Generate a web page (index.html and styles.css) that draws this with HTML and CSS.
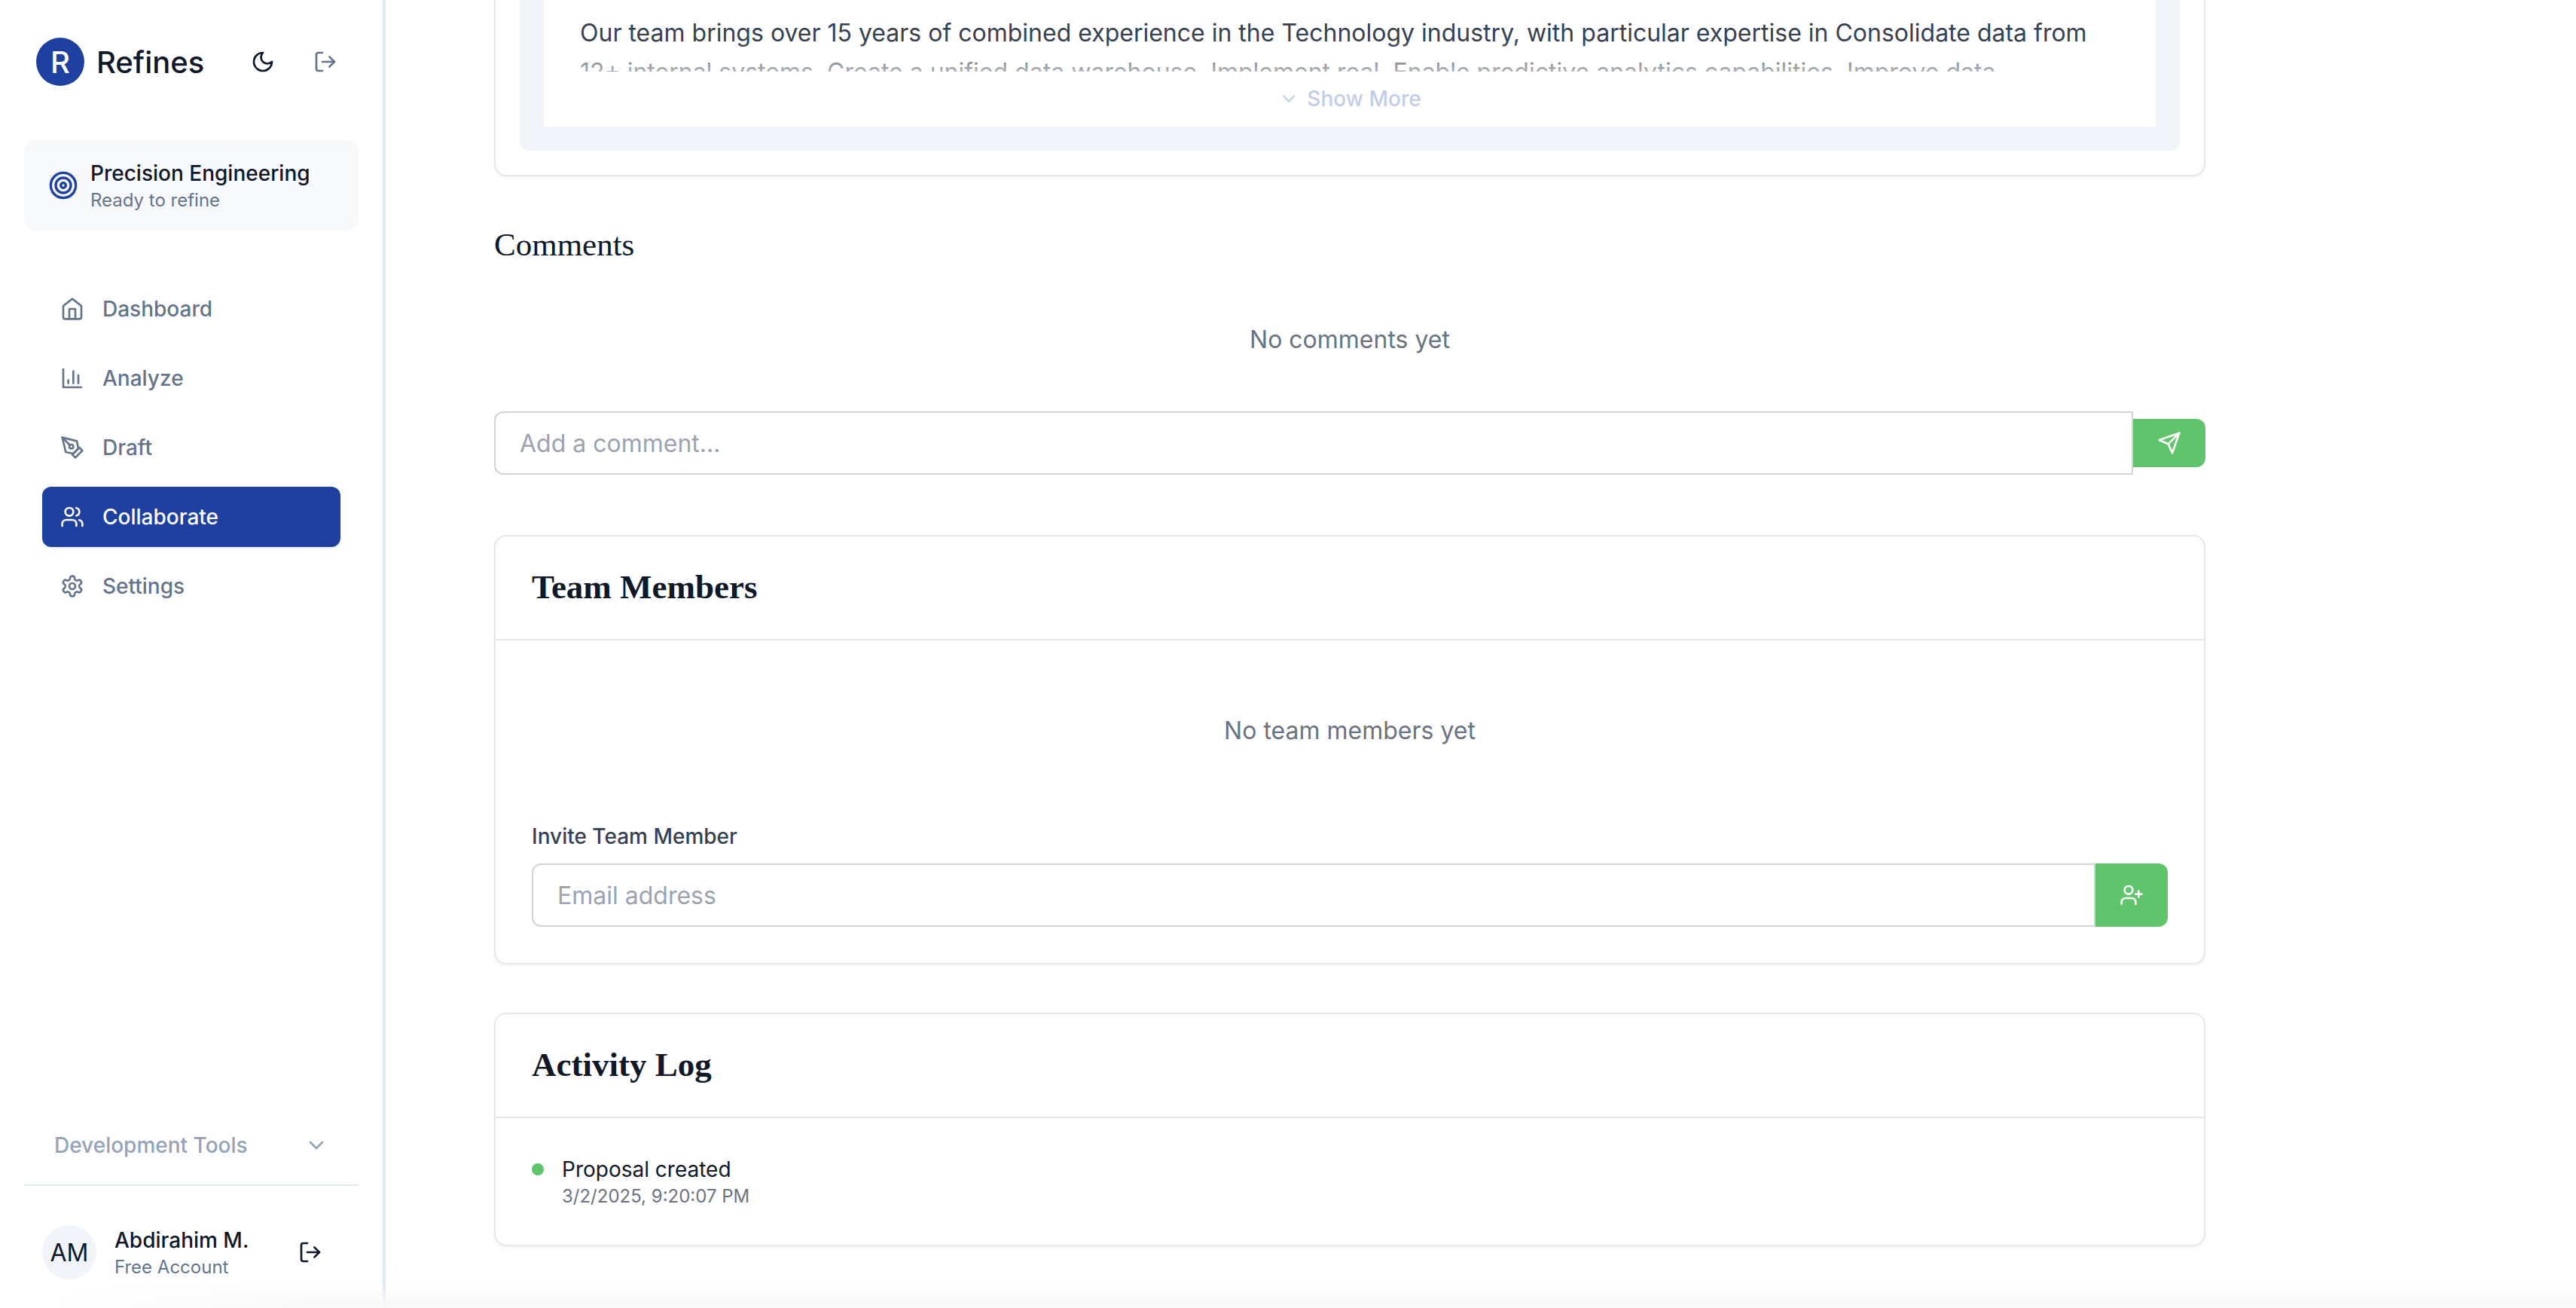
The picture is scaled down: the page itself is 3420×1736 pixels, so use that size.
FILE: index.html
```html
<!DOCTYPE html>
<html lang="en">
<head>
    <meta charset="UTF-8">
    <title>Refines</title>
    <link rel="stylesheet" href="styles.css">
</head>
<body>
<svg class="icon-defs" width="0" height="0">
    <symbol id="i-moon" viewBox="0 0 24 24"><path d="M12 3a6 6 0 0 0 9 9 9 9 0 1 1-9-9Z"/></symbol>
    <symbol id="i-logout" viewBox="0 0 24 24"><path d="M9 21H5a2 2 0 0 1-2-2V5a2 2 0 0 1 2-2h4"/><polyline points="16 17 21 12 16 7"/><line x1="21" y1="12" x2="9" y2="12"/></symbol>
    <symbol id="i-target" viewBox="0 0 24 24"><circle cx="12" cy="12" r="10"/><circle cx="12" cy="12" r="6"/><circle cx="12" cy="12" r="2"/></symbol>
    <symbol id="i-home" viewBox="0 0 24 24"><path d="m3 9 9-7 9 7v11a2 2 0 0 1-2 2H5a2 2 0 0 1-2-2z"/><polyline points="9 22 9 12 15 12 15 22"/></symbol>
    <symbol id="i-chart" viewBox="0 0 24 24"><path d="M3 3v18h18"/><path d="M18 17V9"/><path d="M13 17V5"/><path d="M8 17v-3"/></symbol>
    <symbol id="i-pen" viewBox="0 0 24 24"><path d="m12 19 7-7 3 3-7 7-3-3z"/><path d="m18 13-1.5-7.5L2 2l3.5 14.5L13 18l5-5z"/><path d="m2 2 7.586 7.586"/><circle cx="11" cy="11" r="2"/></symbol>
    <symbol id="i-users" viewBox="0 0 24 24"><path d="M16 21v-2a4 4 0 0 0-4-4H6a4 4 0 0 0-4 4v2"/><circle cx="9" cy="7" r="4"/><path d="M22 21v-2a4 4 0 0 0-3-3.87"/><path d="M16 3.13a4 4 0 0 1 0 7.75"/></symbol>
    <symbol id="i-settings" viewBox="0 0 24 24"><path d="M12.22 2h-.44a2 2 0 0 0-2 2v.18a2 2 0 0 1-1 1.73l-.43.25a2 2 0 0 1-2 0l-.15-.08a2 2 0 0 0-2.73.73l-.22.38a2 2 0 0 0 .73 2.73l.15.1a2 2 0 0 1 1 1.72v.51a2 2 0 0 1-1 1.74l-.15.09a2 2 0 0 0-.73 2.73l.22.38a2 2 0 0 0 2.73.73l.15-.08a2 2 0 0 1 2 0l.43.25a2 2 0 0 1 1 1.73V20a2 2 0 0 0 2 2h.44a2 2 0 0 0 2-2v-.18a2 2 0 0 1 1-1.73l.43-.25a2 2 0 0 1 2 0l.15.08a2 2 0 0 0 2.73-.73l.22-.39a2 2 0 0 0-.73-2.73l-.15-.08a2 2 0 0 1-1-1.74v-.5a2 2 0 0 1 1-1.74l.15-.09a2 2 0 0 0 .73-2.73l-.22-.38a2 2 0 0 0-2.73-.73l-.15.08a2 2 0 0 1-2 0l-.43-.25a2 2 0 0 1-1-1.73V4a2 2 0 0 0-2-2z"/><circle cx="12" cy="12" r="3"/></symbol>
    <symbol id="i-chevron" viewBox="0 0 24 24"><path d="m6 9 6 6 6-6"/></symbol>
    <symbol id="i-send" viewBox="0 0 24 24"><path d="m22 2-7 20-4-9-9-4Z"/><path d="M22 2 11 13"/></symbol>
    <symbol id="i-user-plus" viewBox="0 0 24 24"><path d="M16 21v-2a4 4 0 0 0-4-4H6a4 4 0 0 0-4 4v2"/><circle cx="9" cy="7" r="4"/><line x1="19" y1="8" x2="19" y2="14"/><line x1="22" y1="11" x2="16" y2="11"/></symbol>
</svg>

<div class="app">
    <aside class="sidebar">
        <div class="brand">
            <span class="brand__logo">R</span>
            <span class="brand__name">Refines</span>
            <div class="brand__actions">
                <svg class="icon icon--dark"><use href="#i-moon"/></svg>
                <svg class="icon"><use href="#i-logout"/></svg>
            </div>
        </div>

        <div class="focus-card">
            <svg class="icon icon--target"><use href="#i-target"/></svg>
            <div>
                <div class="focus-card__title">Precision Engineering</div>
                <div class="focus-card__sub">Ready to refine</div>
            </div>
        </div>

        <nav class="nav">
            <a class="nav__item"><svg class="icon"><use href="#i-home"/></svg>Dashboard</a>
            <a class="nav__item"><svg class="icon"><use href="#i-chart"/></svg>Analyze</a>
            <a class="nav__item"><svg class="icon"><use href="#i-pen"/></svg>Draft</a>
            <a class="nav__item nav__item--active"><svg class="icon"><use href="#i-users"/></svg>Collaborate</a>
            <a class="nav__item"><svg class="icon"><use href="#i-settings"/></svg>Settings</a>
        </nav>

        <div class="dev-tools">
            <span>Development Tools</span>
            <svg class="icon icon--muted"><use href="#i-chevron"/></svg>
        </div>

        <div class="account">
            <span class="account__avatar">AM</span>
            <div class="account__info">
                <div class="account__name">Abdirahim M.</div>
                <div class="account__plan">Free Account</div>
            </div>
            <svg class="icon icon--dark"><use href="#i-logout"/></svg>
        </div>
    </aside>

    <main class="main">
        <section class="card proposal">
            <div class="proposal__inner">
                <div class="proposal__sheet">
                    <p class="proposal__text">Our team brings over 15 years of combined experience in the Technology industry, with particular expertise in Consolidate data from 12+ internal systems. Create a unified data warehouse. Implement real. Enable predictive analytics capabilities. Improve data</p>
                    <div class="proposal__more">
                        <svg class="icon icon--more"><use href="#i-chevron"/></svg>
                        <span>Show More</span>
                    </div>
                </div>
            </div>
        </section>

        <section class="comments">
            <h3 class="comments__title">Comments</h3>
            <p class="empty comments__empty">No comments yet</p>
            <div class="comments__row">
                <input class="field" type="text" placeholder="Add a comment...">
                <button class="btn btn--small" type="button"><svg class="icon icon--white"><use href="#i-send"/></svg></button>
            </div>
        </section>

        <section class="card team">
            <header class="card__head"><h2>Team Members</h2></header>
            <div class="team__body">
                <p class="empty">No team members yet</p>
                <label class="team__label">Invite Team Member</label>
                <div class="team__row">
                    <input class="field" type="text" placeholder="Email address">
                    <button class="btn" type="button"><svg class="icon icon--white"><use href="#i-user-plus"/></svg></button>
                </div>
            </div>
        </section>

        <section class="card activity">
            <header class="card__head"><h2>Activity Log</h2></header>
            <div class="activity__body">
                <div class="activity__item">
                    <span class="activity__dot"></span>
                    <div>
                        <div class="activity__text">Proposal created</div>
                        <div class="activity__time">3/2/2025, 9:20:07 PM</div>
                    </div>
                </div>
            </div>
        </section>
    </main>

    <div class="page-fade"></div>
</div>
</body>
</html>
```

FILE: styles.css
```css
* {
    box-sizing: border-box;
}

html, body {
    margin: 0;
    height: 100%;
}

body {
    background: #fff;
    color: #0f172a;
    font-family: "Inter", "Liberation Sans", sans-serif;
}

.icon-defs {
    position: absolute;
}

.app {
    position: relative;
    display: flex;
    height: 1736px;
    overflow: hidden;
}

/* icons */
.icon {
    flex: none;
    width: 32px;
    height: 32px;
    fill: none;
    stroke: #64748b;
    stroke-width: 2;
    stroke-linecap: round;
    stroke-linejoin: round;
}

.icon--dark {
    stroke: #0f172a;
}

.icon--muted {
    stroke: #94a3b8;
}

.icon--white {
    stroke: #fff;
}

.icon--target {
    width: 40px;
    height: 40px;
    stroke: #1e40a0;
}

.icon--more {
    width: 28px;
    height: 28px;
    stroke: #c3cde8;
}

/* sidebar */
.sidebar {
    flex: none;
    display: flex;
    flex-direction: column;
    width: 512px;
    padding: 50px 32px 38px;
    border-right: 4px solid #e2e8f0;
}

.brand {
    display: flex;
    align-items: center;
    height: 64px;
    padding: 0 28px 0 16px;
}

.brand__logo {
    display: flex;
    align-items: center;
    justify-content: center;
    width: 64px;
    height: 64px;
    border-radius: 50%;
    background: #1e40a0;
    color: #fff;
    font-size: 40px;
    font-weight: 500;
}

.brand__name {
    margin-left: 16px;
    font-size: 40px;
    font-weight: 500;
}

.brand__actions {
    display: flex;
    gap: 51px;
    margin-left: auto;
}

.focus-card {
    display: flex;
    align-items: center;
    gap: 16px;
    height: 120px;
    margin-top: 72px;
    padding: 0 32px;
    border-radius: 16px;
    background: #f7f8fa;
}

.focus-card__title {
    font-size: 28px;
    line-height: 40px;
    font-weight: 500;
}

.focus-card__sub {
    font-size: 24px;
    line-height: 32px;
    color: #64748b;
}

.nav {
    display: flex;
    flex-direction: column;
    gap: 12px;
    margin-top: 64px;
    padding: 0 24px;
}

.nav__item {
    display: flex;
    align-items: center;
    gap: 24px;
    height: 80px;
    padding: 0 24px;
    border-radius: 12px;
    color: #64748b;
    font-size: 28px;
    font-weight: 500;
}

.nav__item--active {
    background: #1e40a0;
    color: #fff;
    box-shadow: 0 2px 4px rgba(15, 23, 42, .08);
}

.nav__item--active .icon {
    stroke: #fff;
}

.dev-tools {
    display: flex;
    align-items: center;
    justify-content: space-between;
    height: 64px;
    margin-top: auto;
    margin-bottom: 20px;
    padding: 0 40px;
    color: #94a3b8;
    font-size: 28px;
    font-weight: 500;
}

.account {
    display: flex;
    align-items: center;
    padding: 52px 48px 0 24px;
    border-top: 2px solid #e2e8f0;
}

.account__avatar {
    display: flex;
    align-items: center;
    justify-content: center;
    width: 72px;
    height: 72px;
    border-radius: 50%;
    background: #f1f5f9;
    font-size: 32px;
}

.account__info {
    flex: 1;
    margin-left: 24px;
}

.account__name {
    font-size: 28px;
    line-height: 40px;
    font-weight: 500;
}

.account__plan {
    font-size: 24px;
    line-height: 32px;
    color: #64748b;
}

/* main column */
.main {
    flex: 1;
    min-width: 0;
    padding: 0 492px 0 144px;
}

.card {
    border: 2px solid #e5e7eb;
    border-radius: 16px;
    background: #fff;
    box-shadow: 0 2px 4px rgba(15, 23, 42, .05);
}

.card__head {
    display: flex;
    align-items: center;
    height: 138px;
    padding: 0 48px 2px;
    border-bottom: 2px solid #e5e7eb;
}

.card__head h2 {
    margin: 0;
    font-family: "Liberation Serif", serif;
    font-size: 45px;
    font-weight: 700;
    color: #111827;
}

.empty {
    margin: 0;
    color: #6b7280;
    font-size: 32px;
    line-height: 48px;
    text-align: center;
}

.field {
    flex: 1;
    min-width: 0;
    height: 84px;
    padding: 0 32px;
    border: 2px solid #d1d5db;
    border-radius: 12px 0 0 12px;
    background: #fff;
    color: #111827;
    font-family: inherit;
    font-size: 32px;
    outline: none;
}

.field::placeholder {
    color: #9ca3af;
}

.btn {
    flex: none;
    display: flex;
    align-items: center;
    justify-content: center;
    width: 96px;
    height: 84px;
    padding: 0;
    border: 0;
    border-radius: 0 12px 12px 0;
    background: #5fc46b;
}

.btn--small {
    height: 64px;
}

/* proposal, scrolled so only the end of it shows */
.proposal {
    margin-top: -40px;
    padding: 0 32px 32px;
}

.proposal__inner {
    padding: 0 32px 32px;
    border-radius: 0 0 12px 12px;
    background: #f1f5f9;
}

.proposal__sheet {
    position: relative;
    height: 206px;
    padding: 56px 48px 0;
    overflow: hidden;
    background: #fff;
}

.proposal__text {
    width: 2044px;
    margin: 0;
    color: #374151;
    font-size: 32px;
    line-height: 52px;
}

.proposal__more {
    position: absolute;
    left: 0;
    right: 0;
    bottom: 0;
    display: flex;
    align-items: center;
    justify-content: center;
    gap: 10px;
    height: 73px;
    padding-bottom: 2px;
    background: #fff;
    color: #c3cde8;
    font-size: 28px;
    font-weight: 500;
}

.proposal__more::before {
    content: "";
    position: absolute;
    left: 0;
    right: 0;
    bottom: 100%;
    height: 40px;
    background: linear-gradient(to bottom, rgba(255, 255, 255, 0), rgba(255, 255, 255, .6));
}

/* comments */
.comments {
    margin-top: 63px;
}

.comments__title {
    margin: 0;
    font-family: "Liberation Serif", serif;
    font-size: 43px;
    line-height: 56px;
    font-weight: 400;
    color: #0f172a;
}

.comments__empty {
    margin-top: 74px;
}

.comments__row {
    display: flex;
    align-items: center;
    margin-top: 71px;
}

/* team */
.team {
    margin-top: 80px;
}

.team__body {
    padding: 96px 48px 48px;
}

.team__label {
    display: block;
    margin: 96px 0 16px;
    color: #374151;
    font-size: 28px;
    line-height: 40px;
    font-weight: 500;
}

.team__row {
    display: flex;
}

/* activity */
.activity {
    margin-top: 64px;
}

.activity__body {
    padding: 48px;
}

.activity__item {
    display: flex;
    gap: 24px;
}

.activity__dot {
    flex: none;
    width: 16px;
    height: 16px;
    margin-top: 12px;
    border-radius: 50%;
    background: #5fc46b;
}

.activity__text {
    color: #111827;
    font-size: 28px;
    line-height: 40px;
}

.activity__time {
    color: #6b7280;
    font-size: 24px;
    line-height: 32px;
}

/* faint shade along the bottom edge of the window */
.page-fade {
    position: absolute;
    left: 0;
    right: 0;
    bottom: 0;
    height: 36px;
    background: linear-gradient(to top, #f8f8f9, rgba(248, 248, 249, 0));
    -webkit-mask-image: linear-gradient(to right, transparent 60px, #000 400px);
    mask-image: linear-gradient(to right, transparent 60px, #000 400px);
    pointer-events: none;
}
```
